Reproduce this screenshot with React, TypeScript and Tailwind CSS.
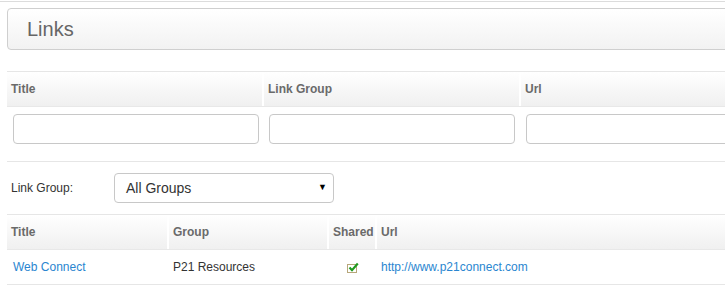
import React from 'react';

const filterCols = ['Title', 'Link Group', 'Url'];

const resultCols = [
  { name: 'Title', w: 'w-[162px]' },
  { name: 'Group', w: 'w-[160px]' },
  { name: 'Shared', w: 'w-[48px]' },
  { name: 'Url', w: 'flex-1' },
];

function SharedIcon() {
  return (
    <svg width="12" height="11" viewBox="0 0 12 11" aria-hidden="true">
      <rect x="0.5" y="2.5" width="9" height="8" fill="#fff" stroke="#b7a77a" />
      <path d="M2.5 5.5 L5 8.2 L10.8 1.6" fill="none" stroke="#1f9a1f" strokeWidth="2.2" />
    </svg>
  );
}

export default function App() {
  return (
    <div className="w-[725px] h-[289px] overflow-hidden bg-white font-['Liberation_Sans',Arial,sans-serif] text-[12px] text-[#333]">
      <div className="w-[790px]">
        {/* top rule */}
        <div className="h-[2px] border-b border-[#dcdcdc] mb-[6px]" />

        {/* page header */}
        <div className="ml-[7px] h-[42px] flex items-center pl-[19px] rounded-[4px] border border-[#cfcfcf] bg-linear-to-b from-white to-[#f2f2f2]">
          <span className="text-[20px] text-[#666] leading-none">Links</span>
        </div>

        {/* filter table */}
        <div className="ml-[7px] mt-[21px] border-t border-[#e6e6e6]">
          <div className="flex h-[35px] bg-linear-to-b from-white to-[#f0f0f0] border-b border-[#e8e8e8]">
            {filterCols.map((c) => (
              <div
                key={c}
                className="w-[257px] flex items-center pl-[4px] border-r-2 border-white font-bold text-[#6a6a6a]"
              >
                {c}
              </div>
            ))}
          </div>
          <div className="flex border-b border-[#e6e6e6]">
            {filterCols.map((c, i) => (
              <div key={c} className={`w-[257px] pt-[7px] pb-[17px] ${i === 0 ? 'pl-[6px]' : 'pl-[5px]'}`}>
                <input
                  type="text"
                  className="w-[246px] h-[30px] rounded-[4px] border border-[#c8c8c8] bg-white outline-none"
                />
              </div>
            ))}
          </div>
        </div>

        {/* group select */}
        <div className="ml-[7px] flex items-center h-[52px]">
          <span className="w-[107px] pl-[4px] text-[#333]">Link Group:</span>
          <div className="w-[220px] h-[30px] flex items-center justify-between pl-[11px] pr-[6px] rounded-[4px] border border-[#c8c8c8] bg-white">
            <span className="text-[14px] text-[#333]">All Groups</span>
            <span className="text-[9px] text-black">▼</span>
          </div>
        </div>

        {/* results table */}
        <div className="ml-[7px] w-[783px] border-t border-[#e6e6e6]">
          <div className="flex h-[35px] bg-linear-to-b from-white to-[#f0f0f0] border-b border-[#e8e8e8]">
            {resultCols.map((c, i) => (
              <div
                key={c.name}
                className={`${c.w} flex items-center pl-[4px] font-bold text-[#6a6a6a] ${i < 3 ? 'border-r-2 border-white' : ''}`}
              >
                {c.name}
              </div>
            ))}
          </div>
          <div className="flex h-[35px] items-center border-b border-[#e6e6e6]">
            <div className="w-[162px] pl-[6px]">
              <a href="#" className="text-[#2a86d0]">Web Connect</a>
            </div>
            <div className="w-[160px] pl-[4px] text-[#333]">P21 Resources</div>
            <div className="w-[48px] flex justify-center pt-[1px]">
              <SharedIcon />
            </div>
            <div className="flex-1 pl-[4px]">
              <a href="#" className="text-[#2a86d0]">http://www.p21connect.com</a>
            </div>
          </div>
        </div>
      </div>
    </div>
  );
}
